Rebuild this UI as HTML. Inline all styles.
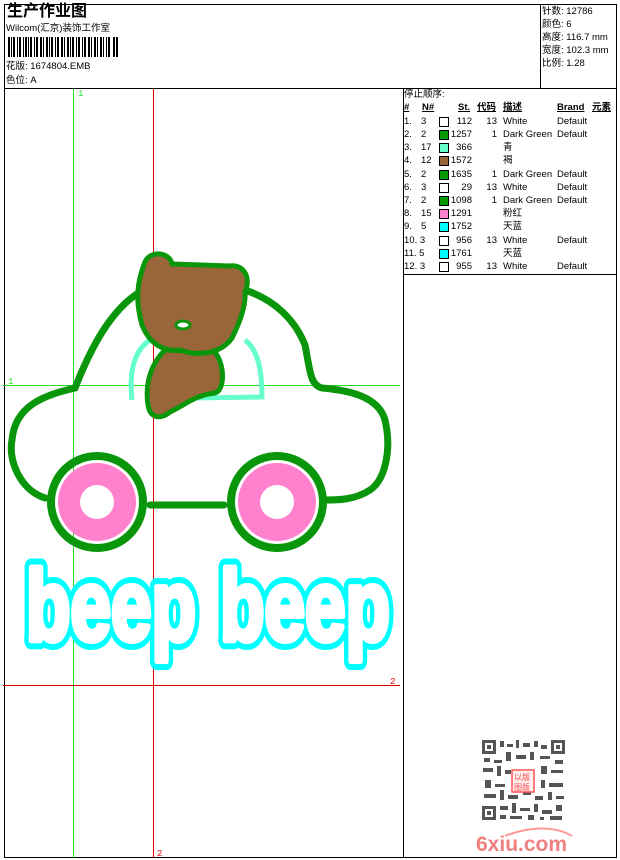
<!DOCTYPE html>
<html><head><meta charset="utf-8"><style>
body{margin:0;width:620px;height:860px;background:#fff;position:relative;overflow:hidden;font-family:"Liberation Sans","Noto Sans CJK SC",sans-serif;color:#000}
.a{position:absolute;white-space:nowrap;font-size:9.5px;line-height:11px}
.sw{position:absolute;width:8px;height:8px;border:1px solid #000}
</style></head><body>
<svg width="620" height="860" style="position:absolute;left:0;top:0" shape-rendering="crispEdges">
<rect x="4.5" y="4.5" width="612" height="853" fill="none" stroke="#000"/>
<line x1="4" y1="88.5" x2="617" y2="88.5" stroke="#000"/>
<line x1="540.5" y1="4" x2="540.5" y2="88" stroke="#000"/>
<line x1="403.5" y1="88" x2="403.5" y2="858" stroke="#000"/>
<line x1="403" y1="274.5" x2="617" y2="274.5" stroke="#000"/>
<line x1="73.5" y1="89" x2="73.5" y2="858" stroke="#22dd22"/>
<line x1="3" y1="385.5" x2="400" y2="385.5" stroke="#22dd22"/>
<line x1="153.5" y1="89" x2="153.5" y2="858" stroke="#dd0000"/>
<line x1="3" y1="685.5" x2="400" y2="685.5" stroke="#dd0000"/>
<text x="78" y="96" font-size="9" fill="#22dd22" font-family="Liberation Mono">1</text>
<text x="8" y="384" font-size="9" fill="#22dd22" font-family="Liberation Mono">1</text>
<text x="390" y="684" font-size="9" fill="#dd0000" font-family="Liberation Mono">2</text>
<text x="157" y="856" font-size="9" fill="#dd0000" font-family="Liberation Mono">2</text>
<g fill="#000">
<rect x="8" y="37" width="2" height="20"/><rect x="11" y="37" width="1" height="20"/><rect x="13" y="37" width="2" height="20"/><rect x="17" y="37" width="1" height="20"/><rect x="19" y="37" width="2" height="20"/><rect x="23" y="37" width="1" height="20"/><rect x="25" y="37" width="2" height="20"/><rect x="28" y="37" width="1" height="20"/><rect x="30" y="37" width="2" height="20"/><rect x="34" y="37" width="1" height="20"/><rect x="36" y="37" width="2" height="20"/><rect x="40" y="37" width="2" height="20"/><rect x="43" y="37" width="1" height="20"/><rect x="46" y="37" width="2" height="20"/><rect x="49" y="37" width="1" height="20"/><rect x="51" y="37" width="2" height="20"/><rect x="55" y="37" width="1" height="20"/><rect x="57" y="37" width="2" height="20"/><rect x="61" y="37" width="2" height="20"/><rect x="64" y="37" width="1" height="20"/><rect x="67" y="37" width="2" height="20"/><rect x="70" y="37" width="1" height="20"/><rect x="72" y="37" width="2" height="20"/><rect x="76" y="37" width="1" height="20"/><rect x="78" y="37" width="2" height="20"/><rect x="82" y="37" width="1" height="20"/><rect x="84" y="37" width="2" height="20"/><rect x="88" y="37" width="2" height="20"/><rect x="91" y="37" width="1" height="20"/><rect x="94" y="37" width="2" height="20"/><rect x="97" y="37" width="1" height="20"/><rect x="100" y="37" width="2" height="20"/><rect x="103" y="37" width="1" height="20"/><rect x="106" y="37" width="1" height="20"/><rect x="108" y="37" width="2" height="20"/><rect x="113" y="37" width="2" height="20"/><rect x="116" y="37" width="2" height="20"/>
</g>
</svg>
<svg width="620" height="860" style="position:absolute;left:0;top:0">
<g fill="none" stroke="#0a960a" stroke-width="7" stroke-linecap="round">
<path d="M45,498 C20,490 8,460 12,440 C15,405 45,395 75,388 C90,350 110,310 140,292"/>
<path d="M245,290 C275,300 295,320 305,345 C310,370 310,385 322,388 C345,390 378,395 385,420 C392,450 385,480 370,490 C355,500 338,500 325,500"/>
<path d="M150,505 L224,505"/>
</g>
<path d="M132,400 C128,365 138,348 150,340 M245,340 C258,350 262,370 262,397 L190,398" fill="none" stroke="#66ffcc" stroke-width="5"/>
<path d="M165,350 C150,365 145,385 148,405 C150,418 160,420 170,412 C185,405 195,395 215,393 C225,390 225,365 215,352 Z" fill="#99663a" stroke="#0a960a" stroke-width="5"/>
<path d="M145,262 C150,250 170,252 172,264 L230,266 C242,264 252,276 245,292 C246,305 240,322 232,338 C220,355 195,356 180,350 C165,352 150,345 142,325 C135,300 137,282 145,262 Z" fill="#99663a" stroke="#0a960a" stroke-width="5"/>
<ellipse cx="183" cy="325" rx="7" ry="4" fill="#fff" stroke="#0a960a" stroke-width="3"/>
<circle cx="97" cy="502" r="46" fill="none" stroke="#0a960a" stroke-width="8"/>
<circle cx="97" cy="502" r="28" fill="none" stroke="#ff80cc" stroke-width="22"/>
<circle cx="277" cy="502" r="46" fill="none" stroke="#0a960a" stroke-width="8"/>
<circle cx="277" cy="502" r="28" fill="none" stroke="#ff80cc" stroke-width="22"/>
<g style="font-family:'Liberation Sans';font-weight:bold;font-size:100px" stroke-linejoin="round">
<text x="26" y="640" textLength="170" lengthAdjust="spacingAndGlyphs" fill="#00ffff" stroke="#00ffff" stroke-width="18">beep</text>
<text x="220" y="640" textLength="170" lengthAdjust="spacingAndGlyphs" fill="#00ffff" stroke="#00ffff" stroke-width="18">beep</text>
<text x="26" y="640" textLength="170" lengthAdjust="spacingAndGlyphs" fill="#fff" stroke="#fff" stroke-width="6">beep</text>
<text x="220" y="640" textLength="170" lengthAdjust="spacingAndGlyphs" fill="#fff" stroke="#fff" stroke-width="6">beep</text>
</g>
<g fill="#555" shape-rendering="crispEdges">
<rect x="482" y="740" width="14" height="14"/><rect x="485" y="743" width="8" height="8" fill="#fff"/><rect x="487" y="745" width="4" height="4"/>
<rect x="551" y="740" width="14" height="14"/><rect x="554" y="743" width="8" height="8" fill="#fff"/><rect x="556" y="745" width="4" height="4"/>
<rect x="482" y="806" width="14" height="14"/><rect x="485" y="809" width="8" height="8" fill="#fff"/><rect x="487" y="811" width="4" height="4"/>
<rect x="500" y="741" width="4" height="6"/><rect x="507" y="744" width="6" height="3"/><rect x="516" y="740" width="3" height="8"/><rect x="523" y="743" width="7" height="4"/><rect x="534" y="741" width="4" height="6"/><rect x="541" y="745" width="6" height="4"/>
<rect x="484" y="758" width="6" height="4"/><rect x="494" y="760" width="8" height="3"/><rect x="506" y="752" width="5" height="9"/><rect x="516" y="755" width="10" height="4"/><rect x="530" y="752" width="4" height="8"/><rect x="540" y="756" width="10" height="3"/><rect x="555" y="760" width="8" height="4"/>
<rect x="483" y="768" width="10" height="4"/><rect x="497" y="766" width="4" height="10"/><rect x="505" y="770" width="6" height="4"/><rect x="541" y="766" width="6" height="8"/><rect x="551" y="770" width="12" height="3"/>
<rect x="485" y="780" width="6" height="8"/><rect x="495" y="784" width="10" height="3"/><rect x="541" y="780" width="4" height="8"/><rect x="549" y="783" width="14" height="4"/>
<rect x="484" y="794" width="12" height="4"/><rect x="500" y="790" width="4" height="10"/><rect x="508" y="795" width="10" height="4"/><rect x="523" y="792" width="8" height="3"/><rect x="535" y="796" width="8" height="4"/><rect x="548" y="792" width="4" height="8"/><rect x="556" y="796" width="8" height="3"/>
<rect x="500" y="806" width="8" height="4"/><rect x="512" y="803" width="4" height="10"/><rect x="520" y="808" width="10" height="3"/><rect x="534" y="804" width="4" height="8"/><rect x="542" y="810" width="10" height="4"/><rect x="556" y="805" width="6" height="6"/>
<rect x="500" y="815" width="6" height="4"/><rect x="510" y="816" width="12" height="3"/><rect x="528" y="815" width="6" height="5"/><rect x="540" y="817" width="4" height="3"/><rect x="550" y="816" width="12" height="4"/>
</g>
<rect x="512" y="770" width="22" height="22" fill="#fff0f0" stroke="#f55" stroke-width="1.5"/>
<text x="514" y="780" font-size="8" fill="#f44" font-family="Noto Sans CJK SC">以版</text>
<text x="514" y="790" font-size="8" fill="#f44" font-family="Noto Sans CJK SC">图版</text>
<path d="M505,836 C530,826 555,826 572,836" fill="none" stroke="#f99" stroke-width="2"/>
<text x="476" y="851" font-size="21" font-weight="bold" fill="#f08080" font-family="Liberation Sans">6xiu.com</text>
</svg>
<div class="a" style="left:7px;top:3px;font-size:16px;line-height:18px;font-weight:bold">生产作业图</div>
<div class="a" style="left:6px;top:23px">Wilcom(汇京)装饰工作室</div>
<div class="a" style="left:6px;top:61px">花版: 1674804.EMB</div>
<div class="a" style="left:6px;top:75px">色位: A</div>
<div class="a" style="left:542px;top:6px">针数: 12786</div>
<div class="a" style="left:542px;top:19px">颜色: 6</div>
<div class="a" style="left:542px;top:32px">高度: 116.7 mm</div>
<div class="a" style="left:542px;top:45px">宽度: 102.3 mm</div>
<div class="a" style="left:542px;top:58px">比例: 1.28</div>
<div class="a" style="left:404px;top:89px">停止顺序:</div>
<div class="a" style="left:404px;top:102px;font-weight:bold;text-decoration:underline">#</div>
<div class="a" style="left:422px;top:102px;font-weight:bold;text-decoration:underline">N#</div>
<div class="a" style="left:458px;top:102px;font-weight:bold;text-decoration:underline">St.</div>
<div class="a" style="left:477px;top:102px;font-weight:bold;text-decoration:underline">代码</div>
<div class="a" style="left:503px;top:102px;font-weight:bold;text-decoration:underline">描述</div>
<div class="a" style="left:557px;top:102px;font-weight:bold;text-decoration:underline">Brand</div>
<div class="a" style="left:592px;top:102px;font-weight:bold;text-decoration:underline">元素</div>
<div style="position:absolute;left:0;top:0">
<div class="a" style="left:404px;top:116px">1.</div><div class="a" style="left:421px;top:116px">3</div><div class="sw" style="left:439px;top:117px;background:#fff"></div><div class="a" style="left:450px;top:116px;width:22px;text-align:right">112</div><div class="a" style="left:480px;top:116px;width:17px;text-align:right">13</div><div class="a" style="left:503px;top:116px">White</div><div class="a" style="left:557px;top:116px">Default</div>
<div class="a" style="left:404px;top:129px">2.</div><div class="a" style="left:421px;top:129px">2</div><div class="sw" style="left:439px;top:130px;background:#009900"></div><div class="a" style="left:450px;top:129px;width:22px;text-align:right">1257</div><div class="a" style="left:480px;top:129px;width:17px;text-align:right">1</div><div class="a" style="left:503px;top:129px">Dark Green</div><div class="a" style="left:557px;top:129px">Default</div>
<div class="a" style="left:404px;top:142px">3.</div><div class="a" style="left:421px;top:142px">17</div><div class="sw" style="left:439px;top:143px;background:#66ffcc"></div><div class="a" style="left:450px;top:142px;width:22px;text-align:right">366</div><div class="a" style="left:503px;top:142px">青</div>
<div class="a" style="left:404px;top:155px">4.</div><div class="a" style="left:421px;top:155px">12</div><div class="sw" style="left:439px;top:156px;background:#99663a"></div><div class="a" style="left:450px;top:155px;width:22px;text-align:right">1572</div><div class="a" style="left:503px;top:155px">褐</div>
<div class="a" style="left:404px;top:169px">5.</div><div class="a" style="left:421px;top:169px">2</div><div class="sw" style="left:439px;top:170px;background:#009900"></div><div class="a" style="left:450px;top:169px;width:22px;text-align:right">1635</div><div class="a" style="left:480px;top:169px;width:17px;text-align:right">1</div><div class="a" style="left:503px;top:169px">Dark Green</div><div class="a" style="left:557px;top:169px">Default</div>
<div class="a" style="left:404px;top:182px">6.</div><div class="a" style="left:421px;top:182px">3</div><div class="sw" style="left:439px;top:183px;background:#fff"></div><div class="a" style="left:450px;top:182px;width:22px;text-align:right">29</div><div class="a" style="left:480px;top:182px;width:17px;text-align:right">13</div><div class="a" style="left:503px;top:182px">White</div><div class="a" style="left:557px;top:182px">Default</div>
<div class="a" style="left:404px;top:195px">7.</div><div class="a" style="left:421px;top:195px">2</div><div class="sw" style="left:439px;top:196px;background:#009900"></div><div class="a" style="left:450px;top:195px;width:22px;text-align:right">1098</div><div class="a" style="left:480px;top:195px;width:17px;text-align:right">1</div><div class="a" style="left:503px;top:195px">Dark Green</div><div class="a" style="left:557px;top:195px">Default</div>
<div class="a" style="left:404px;top:208px">8.</div><div class="a" style="left:421px;top:208px">15</div><div class="sw" style="left:439px;top:209px;background:#ff80cc"></div><div class="a" style="left:450px;top:208px;width:22px;text-align:right">1291</div><div class="a" style="left:503px;top:208px">粉红</div>
<div class="a" style="left:404px;top:221px">9.</div><div class="a" style="left:421px;top:221px">5</div><div class="sw" style="left:439px;top:222px;background:#00ffff"></div><div class="a" style="left:450px;top:221px;width:22px;text-align:right">1752</div><div class="a" style="left:503px;top:221px">天蓝</div>
<div class="a" style="left:404px;top:235px">10. 3</div><div class="sw" style="left:439px;top:236px;background:#fff"></div><div class="a" style="left:450px;top:235px;width:22px;text-align:right">956</div><div class="a" style="left:480px;top:235px;width:17px;text-align:right">13</div><div class="a" style="left:503px;top:235px">White</div><div class="a" style="left:557px;top:235px">Default</div>
<div class="a" style="left:404px;top:248px">11. 5</div><div class="sw" style="left:439px;top:249px;background:#00ffff"></div><div class="a" style="left:450px;top:248px;width:22px;text-align:right">1761</div><div class="a" style="left:503px;top:248px">天蓝</div>
<div class="a" style="left:404px;top:261px">12. 3</div><div class="sw" style="left:439px;top:262px;background:#fff"></div><div class="a" style="left:450px;top:261px;width:22px;text-align:right">955</div><div class="a" style="left:480px;top:261px;width:17px;text-align:right">13</div><div class="a" style="left:503px;top:261px">White</div><div class="a" style="left:557px;top:261px">Default</div>
</div>
</body></html>
